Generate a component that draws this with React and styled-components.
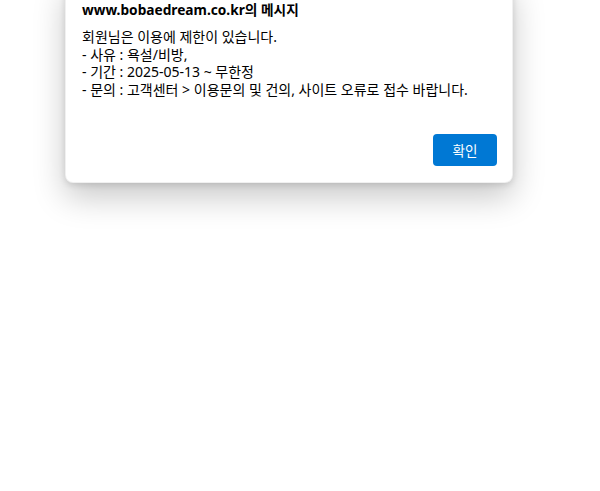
import React from "react";
import styled, { createGlobalStyle } from "styled-components";

const GlobalStyle = createGlobalStyle`
  html, body {
    margin: 0;
    padding: 0;
    background: #ffffff;
    overflow: hidden;
  }
  body {
    font-family: "Noto Sans", "Noto Sans CJK KR", sans-serif;
  }
`;

const Page = styled.div`
  width: 600px;
  height: 491px;
  padding-left: 65px;
  box-sizing: border-box;
`;

const Dialog = styled.div`
  width: 448px;
  margin-top: -21px;
  padding: 20px 15px 16px 16px;
  box-sizing: border-box;
  background: #ffffff;
  border-radius: 8px;
  border: 1px solid rgba(0, 0, 0, 0.06);
  box-shadow: 0 14px 32px rgba(0, 0, 0, 0.22), 0 2px 6px rgba(0, 0, 0, 0.12);
  display: flex;
  flex-direction: column;
`;

const Title = styled.h1`
  margin: 0;
  font-size: 13.7px;
  line-height: 20px;
  font-weight: 700;
  color: #000000;
`;

const Message = styled.div`
  margin-top: 8px;
  font-size: 14px;
  line-height: 17.5px;
  color: #000000;
`;

const Line = styled.div`
  white-space: nowrap;
`;

const Footer = styled.div`
  margin-top: 36px;
  display: flex;
  justify-content: flex-end;
`;

const OkButton = styled.button`
  width: 64px;
  height: 32px;
  border: none;
  border-radius: 4px;
  background: #0078d4;
  color: #ffffff;
  font-family: inherit;
  font-size: 13.5px;
  cursor: pointer;
`;

const lines = [
  "회원님은 이용에 제한이 있습니다.",
  "- 사유 : 욕설/비방,",
  "- 기간 : 2025-05-13 ~ 무한정",
  "- 문의 : 고객센터 > 이용문의 및 건의, 사이트 오류로 접수 바랍니다.",
];

const App = () => {
  return (
    <>
      <GlobalStyle />
      <Page>
        <Dialog>
          <Title>www.bobaedream.co.kr의 메시지</Title>
          <Message>
            {lines.map((text, i) => (
              <Line key={i}>{text}</Line>
            ))}
          </Message>
          <Footer>
            <OkButton>확인</OkButton>
          </Footer>
        </Dialog>
      </Page>
    </>
  );
};

export default App;
